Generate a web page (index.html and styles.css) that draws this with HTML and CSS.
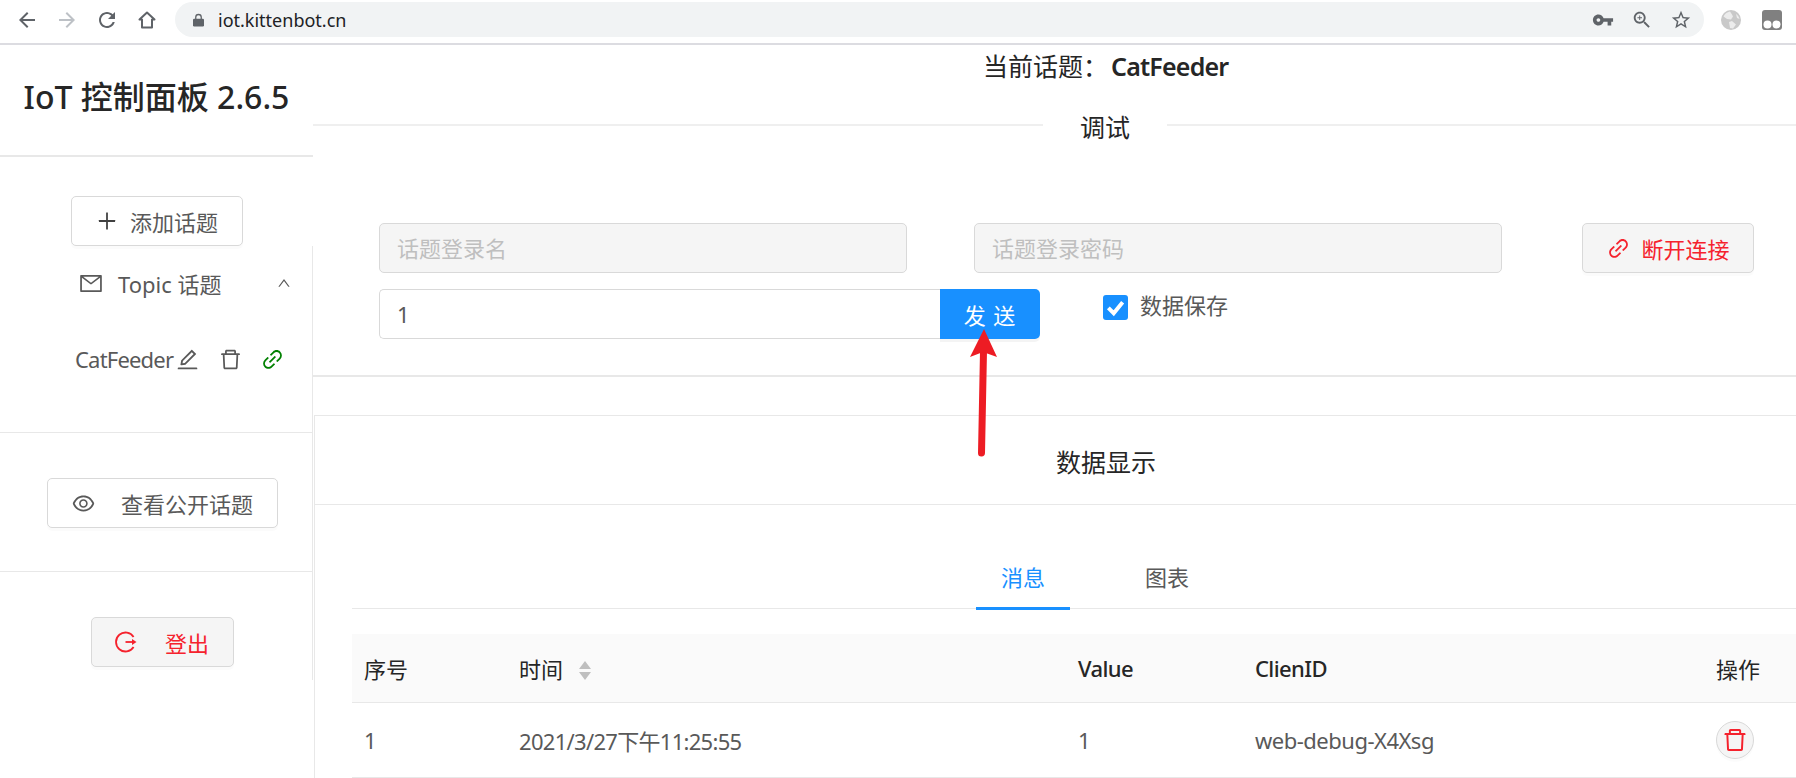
FILE: index.html
```html
<!DOCTYPE html>
<html lang="zh-CN">
<head>
  <meta charset="UTF-8">
  <title>IoT 控制面板</title>
  <link rel="stylesheet" href="styles.css">
</head>
<body>

<svg class="sprite" xmlns="http://www.w3.org/2000/svg">
  <symbol id="i-delete" viewBox="0 0 1024 1024"><path d="M360 184h-8c4.400 0 8-3.600 8-8v8h304v-8c0 4.400 3.600 8 8 8h-8v72h72v-80c0-35.300-28.700-64-64-64H352c-35.300 0-64 28.700-64 64v80h72v-72zm504 72H160c-17.700 0-32 14.300-32 32v32c0 4.400 3.600 8 8 8h60.400l24.700 523c1.600 34.100 29.800 61 63.900 61h454c34.200 0 62.300-26.800 63.900-61l24.700-523H888c4.400 0 8-3.600 8-8v-32c0-17.700-14.300-32-32-32zM731.300 840H292.700l-24.200-512h487l-24.200 512z"/></symbol>
  <symbol id="i-link" viewBox="0 0 1024 1024"><path d="M574 665.400a8.030 8.030 0 00-11.300 0L446.500 781.600c-53.800 53.800-144.600 59.500-204 0-59.500-59.500-53.800-150.200 0-204l116.200-116.200c3.100-3.100 3.100-8.200 0-11.300l-39.800-39.800a8.030 8.030 0 00-11.300 0L191.400 526.500c-84.600 84.600-84.600 221.500 0 306s221.500 84.600 306 0l116.200-116.200c3.100-3.100 3.100-8.200 0-11.300L574 665.400zm258.600-474c-84.600-84.600-221.500-84.600-306 0L410.300 307.600a8.030 8.030 0 000 11.300l39.700 39.700c3.100 3.100 8.200 3.100 11.300 0l116.200-116.200c53.800-53.800 144.600-59.500 204 0 59.500 59.500 53.800 150.200 0 204L665.300 562.600a8.030 8.030 0 000 11.300l39.800 39.800c3.100 3.100 8.200 3.100 11.300 0l116.200-116.200c84.500-84.600 84.500-221.500 0-306.100zM610.100 372.300a8.030 8.030 0 00-11.300 0L372.300 598.700a8.030 8.030 0 000 11.300l39.600 39.600c3.100 3.100 8.200 3.100 11.300 0l226.400-226.400c3.100-3.100 3.100-8.200 0-11.300l-39.500-39.600z"/></symbol>
</svg>

<header class="toolbar">
  <svg class="tb-icon" viewBox="0 0 24 24"><path d="M20 11H7.830l5.590-5.590L12 4l-8 8 8 8 1.410-1.410L7.830 13H20v-2z"/></svg>
  <svg class="tb-icon tb-off" viewBox="0 0 24 24"><path d="M4 11h12.170l-5.590-5.590L12 4l8 8-8 8-1.410-1.410L16.170 13H4v-2z"/></svg>
  <svg class="tb-icon" viewBox="0 0 24 24"><path d="M17.650 6.350C16.200 4.900 14.210 4 12 4c-4.420 0-7.990 3.580-7.990 8s3.570 8 7.990 8c3.730 0 6.840-2.550 7.730-6h-2.080c-.82 2.330-3.040 4-5.650 4-3.310 0-6-2.690-6-6s2.690-6 6-6c1.660 0 3.140.69 4.220 1.780L13 11h7V4l-2.350 2.350z"/></svg>
  <svg class="tb-icon" viewBox="0 0 24 24"><path d="M12 4.500 4.500 11.500H7V19.500h10V11.500h2.500z" fill="none" stroke="#5f6368" stroke-width="2" stroke-linejoin="round"/></svg>
  <div class="omnibox">
    <svg class="lock" viewBox="0 0 12 14"><path d="M3 6V4a3 3 0 016 0v2" fill="none" stroke="#5f6368" stroke-width="1.400"/><rect y="5.500" width="12" height="8.500" rx="1.300" fill="#5f6368"/></svg>
    <span class="url">iot.kittenbot.cn</span>
    <svg class="omni-icon" viewBox="0 0 24 24"><path d="M12.650 10C11.830 7.670 9.610 6 7 6c-3.310 0-6 2.690-6 6s2.690 6 6 6c2.610 0 4.830-1.670 5.650-4H17v4h4v-4h2v-4H12.650zM7 14c-1.100 0-2-.9-2-2s.9-2 2-2 2 .9 2 2-.9 2-2 2z"/></svg>
    <svg class="omni-icon" viewBox="0 0 24 24"><path d="M15.500 14h-.79l-.28-.27C15.410 12.590 16 11.110 16 9.500 16 5.910 13.090 3 9.500 3S3 5.910 3 9.500 5.910 16 9.500 16c1.610 0 3.090-.59 4.230-1.570l.27.28v.79l5 4.990L20.490 19l-4.990-5zm-6 0C7.010 14 5 11.990 5 9.500S7.010 5 9.500 5 14 7.010 14 9.500 11.990 14 9.500 14zm2.500-4h-2v2H9v-2H7V9h2V7h1v2h2v1z"/></svg>
    <svg class="omni-icon" viewBox="0 0 24 24"><path d="M22 9.240l-7.190-.62L12 2 9.190 8.630 2 9.240l5.460 4.730L5.820 21 12 17.270 18.180 21l-1.630-7.030L22 9.240zM12 15.400l-3.760 2.270 1-4.280-3.320-2.880 4.380-.38L12 6.100l1.710 4.040 4.380.38-3.320 2.880 1 4.280L12 15.400z"/></svg>
  </div>
  <svg class="ext globe" viewBox="0 0 20 20">
    <circle cx="10" cy="10" r="10" fill="#c9c9c9"/>
    <path d="M9 1.500C6 2 3.500 4 2.500 6.500L6 9l4 .5 2-3-1-2zM11 11l-3 1 1 6 3 .5 3-4zM15 4l1 4 2.500 1C18 7 17 5 15 4z" fill="#ececec"/>
  </svg>
  <svg class="ext monkey" viewBox="0 0 20 20">
    <rect width="20" height="20" rx="3" fill="#808080"/>
    <circle cx="5.500" cy="14.500" r="4" fill="#fff"/>
    <circle cx="14.500" cy="14.500" r="4" fill="#fff"/>
  </svg>
</header>

<div class="app">
  <aside class="sidebar">
    <h1 class="brand">IoT 控制面板 2.6.5</h1>
    <div class="add-wrap">
      <button class="btn btn-add">
        <svg class="ico plus" viewBox="0 0 1024 1024"><path d="M482 152h60q8 0 8 8v704q0 8-8 8h-60q-8 0-8-8V160q0-8 8-8z"/><path d="M176 474h672q8 0 8 8v60q0 8-8 8H176q-8 0-8-8v-60q0-8 8-8z"/></svg>
        添加话题
      </button>
    </div>
    <nav class="side-menu">
      <div class="topic-head">
        <svg class="ico mail" viewBox="64 160 896 704"><path d="M928 160H96c-17.700 0-32 14.300-32 32v640c0 17.700 14.300 32 32 32h832c17.700 0 32-14.300 32-32V192c0-17.700-14.300-32-32-32zm-40 632H136V270.800l-27.600-21.500 39.300-50.500 42.800 33.300h643.100l42.800-33.300 39.300 50.500-27.700 21.500V792zM833.600 232L512 482 190.400 232l-42.800-33.300-39.300 50.500 27.600 21.500 341.600 265.600a55.990 55.990 0 0068.700 0L888 270.800l27.600-21.500-39.300-50.500-42.700 33.200z"/></svg>
        <span class="topic-label">Topic 话题</span>
        <svg class="ico caret" viewBox="110 240 804 550"><path d="M890.500 755.300L537.900 269.200c-12.800-17.600-39-17.600-51.700 0L133.500 755.300A8 8 0 00140 768h75c5.100 0 9.900-2.500 12.900-6.600L512 369.800l284.100 391.600c3 4.100 7.800 6.600 12.900 6.600h75c6.500 0 10.300-7.400 6.500-12.700z"/></svg>
      </div>
      <div class="topic-item">
        <span class="topic-name">CatFeeder</span>
        <svg class="ico act" viewBox="0 0 1024 1024"><path d="M257.700 752c2 0 4-.2 6-.5L431.900 722c2-.4 3.900-1.300 5.300-2.800l423.900-423.900a9.960 9.960 0 000-14.100L694.900 114.900c-1.900-1.900-4.400-2.900-7.100-2.900s-5.200 1-7.100 2.900L256.800 538.800c-1.500 1.500-2.400 3.300-2.800 5.300l-29.500 168.200a33.500 33.500 0 009.400 29.800c6.600 6.400 14.900 9.900 23.800 9.900zm67.400-174.400L687.800 215l73.300 73.300-362.700 362.600-88.900 15.700 15.600-89zM880 836H144c-17.700 0-32 14.300-32 32v36c0 4.400 3.600 8 8 8h784c4.400 0 8-3.600 8-8v-36c0-17.700-14.300-32-32-32z"/></svg>
        <svg class="ico act act-del"><use href="#i-delete"/></svg>
        <svg class="ico act act-link"><use href="#i-link"/></svg>
      </div>
      <div class="side-block public-block">
        <button class="btn btn-public">
          <svg class="ico eye" viewBox="0 0 1024 1024"><path d="M942.200 486.200C847.400 286.500 704.100 186 512 186c-192.200 0-335.400 100.500-430.200 300.300a60.300 60.300 0 000 51.500C176.600 737.500 319.900 838 512 838c192.200 0 335.400-100.500 430.200-300.300 7.700-16.200 7.700-35 0-51.500zM512 766c-161.300 0-279.400-81.800-362.700-254C232.600 339.800 350.700 258 512 258c161.300 0 279.400 81.800 362.700 254C791.500 684.200 673.400 766 512 766zm-4-430c-97.200 0-176 78.800-176 176s78.800 176 176 176 176-78.800 176-176-78.800-176-176-176zm0 288c-61.900 0-112-50.100-112-112s50.100-112 112-112 112 50.100 112 112-50.100 112-112 112z"/></svg>
          查看公开话题
        </button>
      </div>
      <div class="side-block logout-block">
        <button class="btn btn-logout">
          <svg class="logout-ico" viewBox="0 0 22 22"><path d="M18.600 6A9.500 9.500 0 1 0 18.600 16" fill="none" stroke="#f5222d" stroke-width="1.800"/><path d="M10.500 11h8" fill="none" stroke="#f5222d" stroke-width="1.800"/><path d="M17 8 21.500 11 17 14z" fill="#f5222d"/></svg>
          登出
        </button>
      </div>
    </nav>
  </aside>

  <main class="content">
    <div class="current-topic">当前话题：<b>CatFeeder</b></div>
    <div class="divider">
      <span class="divider-left"></span>
      <span class="divider-text">调试</span>
      <span class="divider-right"></span>
    </div>

    <section class="debug">
      <div class="form-row">
        <input class="input input-off" placeholder="话题登录名" disabled>
        <input class="input input-off" placeholder="话题登录密码" disabled>
        <button class="btn btn-link">
          <svg class="ico red"><use href="#i-link"/></svg>
          断开连接
        </button>
      </div>
      <div class="form-row form-row2">
        <div class="send-group">
          <input class="input send-input" value="1">
          <button class="btn-send">发 送</button>
        </div>
        <label class="check">
          <span class="check-box"><svg viewBox="0 0 14 14"><path d="M3 7.200 6 10.200 11 4" fill="none" stroke="#fff" stroke-width="2.200"/></svg></span>
          <span class="check-label">数据保存</span>
        </label>
      </div>
    </section>

    <section class="data">
      <h2 class="data-title">数据显示</h2>
      <div class="data-body">
        <div class="tabs">
          <span class="tab tab-active">消息</span>
          <span class="tab">图表</span>
        </div>
        <table class="msg-table">
          <thead>
            <tr>
              <th class="col-no">序号</th>
              <th class="col-time">时间<span class="sorter"></span></th>
              <th class="col-value latin">Value</th>
              <th class="col-client latin">ClienID</th>
              <th class="col-op">操作</th>
            </tr>
          </thead>
          <tbody>
            <tr>
              <td>1</td>
              <td class="cell-time">2021/3/27下午11:25:55</td>
              <td>1</td>
              <td>web-debug-X4Xsg</td>
              <td><button class="btn-round"><svg class="ico del-ico"><use href="#i-delete"/></svg></button></td>
            </tr>
          </tbody>
        </table>
      </div>
    </section>
  </main>
</div>

<!-- red annotation arrow on top of the screenshot -->
<svg class="annotation" viewBox="0 0 40 140">
  <path d="M17.500 127 19.500 25" fill="none" stroke="#ed1c24" stroke-width="7" stroke-linecap="round"/>
  <path d="M20 3 33 31 19 26 6 31z" fill="#ed1c24"/>
</svg>

</body>
</html>
```

FILE: styles.css
```css
* {
  box-sizing: border-box;
}

html, body {
  margin: 0;
  height: 778px;
  overflow: hidden;
}

body {
  position: relative;
  font-family: "Noto Sans", "Noto Sans CJK SC", sans-serif;
  font-size: 22px;
  color: #595959;
  background: #fff;
}

.sprite {
  display: none;
}

/* browser toolbar */
.toolbar {
  display: flex;
  align-items: center;
  height: 45px;
  padding: 0 14px 4px 15px;
  border-bottom: 2px solid #dcdce1;
}

.tb-icon {
  width: 24px;
  height: 24px;
  margin-right: 16px;
  fill: #5f6368;
}

.tb-off {
  fill: #bdc1c6;
}

.omnibox {
  display: flex;
  align-items: center;
  flex: 1;
  height: 35px;
  padding: 0 12px 0 18px;
  border-radius: 18px;
  background: #f1f3f4;
}

.lock {
  width: 11px;
  height: 14px;
}

.url {
  flex: 1;
  margin-left: 14px;
  font-size: 18px;
  color: #202124;
}

.omni-icon {
  width: 22px;
  height: 22px;
  margin-left: 17px;
  fill: #5f6368;
}

.ext {
  width: 20px;
  height: 20px;
}

.globe {
  margin-left: 17px;
}

.monkey {
  margin-left: 21px;
}

/* page */
.app {
  display: flex;
  height: 733px;
}

.sidebar {
  flex: none;
  width: 313px;
}

.brand {
  height: 112px;
  margin: 0;
  border-bottom: 2px solid #e8e8e8;
  font-size: 32px;
  font-weight: 500;
  line-height: 104px;
  text-align: center;
  color: #262626;
}

.add-wrap {
  display: flex;
  justify-content: center;
  padding-top: 39px;
}

.btn {
  display: flex;
  align-items: center;
  justify-content: center;
  height: 50px;
  border: 1.500px solid #d9d9d9;
  border-radius: 5px;
  background: #fff;
  box-shadow: 0 3px 0 rgba(0, 0, 0, 0.015);
  font: inherit;
  color: #595959;
}

.ico {
  width: 25px;
  height: 25px;
  fill: currentColor;
}

.btn-add {
  width: 172px;
  gap: 11px;
}

.plus {
  width: 24px;
  height: 24px;
  color: #404040;
}

.side-menu {
  height: 434px;
  border-right: 1.500px solid #e8e8e8;
}

.topic-head {
  display: flex;
  align-items: center;
  height: 74px;
  padding: 0 22px 0 80px;
}

.mail {
  width: 22px;
  height: 17px;
}

.topic-label {
  flex: 1;
  margin-left: 16px;
}

.caret {
  width: 12px;
  height: 8px;
}

.topic-item {
  display: flex;
  align-items: center;
  height: 50px;
  margin-top: 14px;
  padding-left: 75px;
}

.topic-name {
  width: 100px;
  letter-spacing: -0.8px;
}

.act-del {
  margin-left: 18px;
}

.act-link {
  margin-left: 17px;
  color: #008000;
}

.side-block {
  display: flex;
  justify-content: center;
  height: 139px;
  padding: 45px 0 0 12px;
  border-top: 1.500px solid #e8e8e8;
}

.public-block {
  margin-top: 48px;
}

.btn-public {
  width: 231px;
  gap: 25px;
}

.eye {
  width: 25px;
  height: 25px;
}

.btn-logout {
  width: 143px;
  gap: 28px;
  background: #f5f5f5;
  color: #f5222d;
}

.logout-ico {
  width: 22px;
  height: 22px;
}

.red {
  color: #f5222d;
}

/* right side */
.content {
  flex: 1;
  min-width: 0;
}

.current-topic {
  height: 42px;
  padding-left: 670px;
  font-size: 25px;
  line-height: 42px;
  color: #262626;
}

.current-topic b {
  margin-left: 3px;
  font-weight: 600;
  letter-spacing: -0.8px;
}

.divider {
  display: flex;
  align-items: center;
  height: 40px;
  margin-top: 20px;
  font-size: 25px;
  color: #262626;
}

.divider-left,
.divider-right {
  height: 2px;
  margin-top: -4px;
  background: #efefef;
}

.divider-left {
  width: 730px;
}

.divider-right {
  flex: 1;
}

.divider-text {
  padding: 0 37px;
  line-height: 40px;
}

.debug {
  height: 230px;
  padding: 76px 0 0 66px;
  border-bottom: 2px solid #e8e8e8;
}

.form-row {
  display: flex;
  height: 50px;
}

.input {
  width: 528px;
  height: 50px;
  padding: 0 17px;
  border: 1.500px solid #d9d9d9;
  border-radius: 5px;
  font: inherit;
  color: #595959;
  background: #fff;
  outline: none;
}

.input::placeholder {
  color: #bfbfbf;
}

.input-off {
  margin-right: 67px;
  background: #f5f5f5;
}

.btn-link {
  width: 172px;
  margin-left: 13px;
  gap: 10px;
  background: #f5f5f5;
  color: #f5222d;
}

.form-row2 {
  margin-top: 16px;
}

.send-group {
  display: flex;
  width: 661px;
}

.send-input {
  flex: 1;
  width: auto;
  border-right: 0;
  border-radius: 5px 0 0 5px;
}

.btn-send {
  width: 100px;
  height: 50px;
  border: 0;
  border-radius: 0 5px 5px 0;
  background: #1890ff;
  box-shadow: 0 3px 0 rgba(0, 0, 0, 0.045);
  font: inherit;
  color: #fff;
  letter-spacing: 1px;
}

.check {
  display: flex;
  align-items: center;
  height: 36px;
  margin-left: 63px;
  gap: 12px;
}

.check-box {
  display: flex;
  width: 25px;
  height: 25px;
  border-radius: 3px;
  background: #1890ff;
}

.check-label {
  margin-bottom: 6px;
}

.data {
  height: 363px;
  margin-top: 38px;
  margin-left: 1px;
  border-top: 1.500px solid #e8e8e8;
  border-left: 1.500px solid #e8e8e8;
}

.data-title {
  height: 89px;
  margin: 0;
  padding-left: 741px;
  border-bottom: 1.500px solid #e8e8e8;
  font-size: 25px;
  font-weight: 400;
  line-height: 93px;
  color: #262626;
}

.data-body {
  padding-left: 37px;
}

.tabs {
  display: flex;
  align-items: stretch;
  height: 104px;
  padding-top: 50px;
  padding-left: 624px;
  border-bottom: 1.500px solid #e8e8e8;
}

.tab {
  width: 94px;
  margin-right: 74px;
  margin-bottom: -1.500px;
  text-align: center;
  line-height: 44px;
}

.tab + .tab {
  width: 46px;
}

.tab-active {
  border-bottom: 3px solid #1890ff;
  color: #1890ff;
}

.msg-table {
  width: 100%;
  margin-top: 25px;
  border-collapse: collapse;
  table-layout: fixed;
}

.msg-table th {
  height: 68px;
  padding: 0 12px;
  border-bottom: 1.500px solid #e8e8e8;
  background: #fafafa;
  font-weight: 400;
  text-align: left;
  color: #262626;
}

.msg-table th.latin {
  font-weight: 500;
  letter-spacing: -0.6px;
}

.msg-table td {
  height: 75px;
  padding: 0 12px;
  border-bottom: 1.500px solid #e8e8e8;
  letter-spacing: -0.5px;
}

.msg-table td.cell-time {
  letter-spacing: -0.7px;
}

.col-no { width: 155px; }
.col-time { width: 559px; }
.col-value { width: 177px; }
.col-client { width: 461px; }

.sorter {
  position: relative;
  display: inline-block;
  width: 13px;
  height: 20px;
  margin-left: 16px;
  vertical-align: -3px;
}

.sorter::before,
.sorter::after {
  content: "";
  position: absolute;
  left: 0;
  border-left: 6.500px solid transparent;
  border-right: 6.500px solid transparent;
}

.sorter::before {
  top: 0;
  border-bottom: 8px solid #bfbfbf;
}

.sorter::after {
  top: 11px;
  border-top: 8px solid #bfbfbf;
}

.btn-round {
  display: flex;
  align-items: center;
  justify-content: center;
  width: 38px;
  height: 38px;
  padding: 0;
  border: 1.500px solid #d9d9d9;
  border-radius: 50%;
  background: #f5f5f5;
  box-shadow: 0 3px 0 rgba(0, 0, 0, 0.015);
}

.del-ico {
  flex: none;
  width: 28px;
  height: 28px;
  color: #f5222d;
}

.annotation {
  position: absolute;
  left: 964px;
  top: 326px;
  width: 40px;
  height: 140px;
}
```
